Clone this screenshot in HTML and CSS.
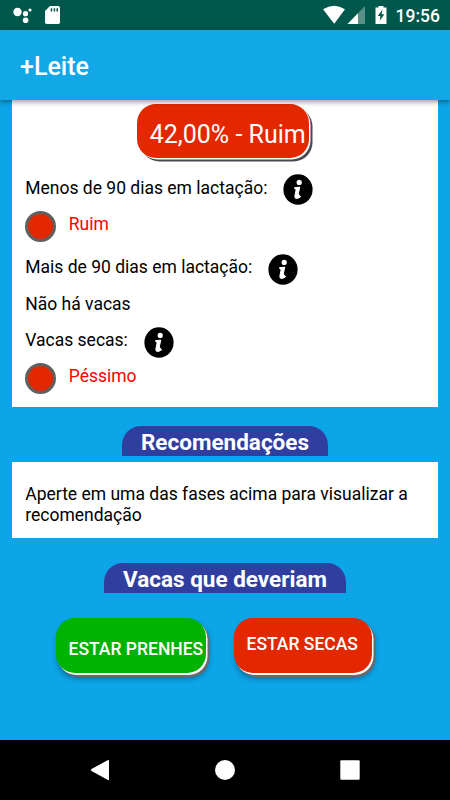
FILE: index.html
```html
<!DOCTYPE html>
<html lang="pt-BR">
<head>
    <meta charset="UTF-8">
    <meta name="viewport" content="width=device-width, initial-scale=1.0">
    <title>+Leite</title>
    <link rel="stylesheet" href="styles.css">
</head>
<body>
    <div class="status-bar">
        <svg class="status-left" width="60" height="30" viewBox="0 0 60 30" fill="#fff">
            <circle cx="17.5" cy="12" r="4.2"/>
            <circle cx="25.5" cy="13.7" r="2.6"/>
            <circle cx="30" cy="10" r="1.6"/>
            <circle cx="25.6" cy="20.2" r="2.8"/>
            <path d="M50 6h8q2 0 2 2v14.300q0 1.700-1.700 1.700H46.700Q45 24 45 22.300V11z"/>
            <path d="M50.700 8.200h1.500v3.200h-1.500zM53.700 8.200h1.500v3.200h-1.500zM56.500 8.200h1.500v3.200h-1.500z" fill="#00574b"/>
        </svg>
        <svg class="status-right" width="72" height="30" viewBox="0 0 72 30" fill="#fff">
            <path d="M4 9.300Q15 2.300 26 9.300L15.200 23.700z"/>
            <path d="M46 6v18H28.500z" opacity=".35"/>
            <path d="M39 13.200V24H28.500z"/>
            <path d="M56.500 7.500h3V6h5v1.500h3V24h-11z"/>
            <path d="M63.400 9.700l-4.700 6.400h2.700l-.7 4.600 4.700-6.500h-2.700z" fill="#00574b"/>
        </svg>
        <span class="clock">19:56</span>
    </div>

    <header class="app-bar">+Leite</header>

    <main class="content">
        <section class="card phases">
            <button class="pill result">42,00% - Ruim</button>
            <div class="row label">
                <span>Menos de 90 dias em lactação:</span>
                <svg class="info" viewBox="0 0 30 31">
                    <ellipse cx="15" cy="15.500" rx="14.600" ry="15.300"/>
                    <circle cx="16.200" cy="8.400" r="2.600" fill="#fff"/>
                    <path d="M11.300 13.900q3-.6 5.500-.8l-2 8.800q-.3 1.500 2.900.7M11.300 13.900l2.200.3-1.600 7.600q-.5 3.200 2.300 2.600 2.100-.4 3.500-1.800" fill="#fff" stroke="#fff" stroke-width="1"/>
                </svg>
            </div>
            <div class="row value">
                <span class="light"></span>
                <span>Ruim</span>
            </div>
            <div class="row label">
                <span>Mais de 90 dias em lactação:</span>
                <svg class="info" viewBox="0 0 30 31">
                    <ellipse cx="15" cy="15.500" rx="14.600" ry="15.300"/>
                    <circle cx="16.200" cy="8.400" r="2.600" fill="#fff"/>
                    <path d="M11.300 13.900q3-.6 5.500-.8l-2 8.800q-.3 1.500 2.900.7M11.300 13.900l2.200.3-1.600 7.600q-.5 3.200 2.300 2.600 2.100-.4 3.500-1.800" fill="#fff" stroke="#fff" stroke-width="1"/>
                </svg>
            </div>
            <div class="row label">
                <span>Não há vacas</span>
            </div>
            <div class="row label">
                <span>Vacas secas:</span>
                <svg class="info" viewBox="0 0 30 31">
                    <ellipse cx="15" cy="15.500" rx="14.600" ry="15.300"/>
                    <circle cx="16.200" cy="8.400" r="2.600" fill="#fff"/>
                    <path d="M11.300 13.900q3-.6 5.500-.8l-2 8.800q-.3 1.500 2.900.7M11.300 13.900l2.200.3-1.600 7.600q-.5 3.200 2.300 2.600 2.100-.4 3.500-1.800" fill="#fff" stroke="#fff" stroke-width="1"/>
                </svg>
            </div>
            <div class="row value">
                <span class="light"></span>
                <span>Péssimo</span>
            </div>
        </section>

        <h2 class="tab">Recomendações</h2>
        <section class="card tip">Aperte em uma das fases acima para visualizar a recomendação</section>

        <h2 class="tab tab-cows">Vacas que deveriam</h2>
        <div class="actions">
            <button class="pill pregnant">ESTAR PRENHES</button>
            <button class="pill dry">ESTAR SECAS</button>
        </div>
    </main>

    <nav class="nav-bar">
        <svg width="450" height="60" viewBox="0 0 450 60" fill="#fff">
            <path d="M108 20q1-.3 1 .8v18.600q0 1.100-1 .6L91.500 31q-1-1 0-2z"/>
            <circle cx="225" cy="30" r="10"/>
            <rect x="340.300" y="20.300" width="19.400" height="19.400" rx="1"/>
        </svg>
    </nav>
</body>
</html>
```
FILE: styles.css
```css
body {
    margin: 0;
    width: 450px;
    height: 800px;
    display: flex;
    flex-direction: column;
    overflow: hidden;
    font-family: Roboto, sans-serif;
    font-size: 17.5px;
    color: #000;
    background-color: #0ca6e8;
}

.status-bar {
    display: flex;
    align-items: center;
    height: 30px;
    background-color: #00574b;
    color: #fff;
}

.status-right {
    margin-left: auto;
}

.clock {
    width: 55px;
    padding: 2px 0 0 4.5px;
    box-sizing: border-box;
    margin-right: 4px;
    font-weight: 500;
    white-space: nowrap;
}

.app-bar {
    height: 70px;
    padding: 2px 20px 0;
    box-sizing: border-box;
    line-height: 70px;
    font-size: 25px;
    font-weight: 500;
    color: #fff;
    background-color: #12a7e7;
    box-shadow: 0 2px 5px rgba(0, 0, 0, 0.4);
    position: relative;
    z-index: 1;
}

.content {
    flex: 1;
    display: flex;
    flex-direction: column;
    align-items: center;
}

.card {
    width: 425.5px;
    box-sizing: border-box;
    padding: 0 13px;
    background-color: #fff;
}

.phases {
    height: 307px;
    padding-top: 3.5px;
    display: flex;
    flex-direction: column;
}

.pill {
    border: none;
    margin: 0;
    padding: 0 0 0 13px;
    box-sizing: border-box;
    font-family: inherit;
    text-align: left;
    white-space: nowrap;
    color: #fff;
    background-color: #e32800;
    border-radius: 19px;
}

.result {
    width: 172px;
    height: 54.5px;
    margin: 0 0 16px 112px;
    padding-top: 7px;
    padding-left: 12.5px;
    font-size: 25px;
    box-shadow: 1.5px 1.5px 0 #fff, 3.5px 3.5px 0 #4a4850;
}

.row {
    display: flex;
    align-items: flex-start;
    height: 36.5px;
}

.row span:not(.light) {
    margin-top: 3.5px;
}

.info {
    width: 30px;
    height: 31px;
    margin-left: 16px;
}

.value {
    height: 43px;
    color: #f00;
}

.value span:not(.light) {
    margin-top: 3px;
}

.light {
    width: 31px;
    height: 31px;
    box-sizing: border-box;
    margin-right: 12.5px;
    border: 3.5px solid #606060;
    border-radius: 50%;
    background-color: #e32800;
}

.tab {
    height: 30px;
    margin: 19px 0 6px;
    padding: 0 18.7px;
    border-radius: 19px 19px 0 0;
    line-height: 32px;
    font-size: 22.5px;
    font-weight: bold;
    color: #fff;
    background-color: #303f9f;
}

.tip {
    height: 76px;
    padding-top: 22px;
    line-height: 20.5px;
}

.tab-cows {
    margin: 25px 0;
}

.actions {
    display: flex;
    gap: 28px;
    margin-right: 23px;
}

.actions .pill {
    height: 55px;
    font-size: 17.5px;
    font-weight: 500;
    box-shadow: 1.5px 2px 0 #fff, 3.5px 4px 0 #696969, 2px 5px 6px rgba(0, 0, 0, 0.4);
}

.actions .pregnant {
    width: 150px;
    padding-top: 6px;
    background-color: #00b300;
}

.actions .dry {
    width: 138px;
    padding-bottom: 4px;
}

.nav-bar {
    height: 60px;
    background-color: #000;
}
```
